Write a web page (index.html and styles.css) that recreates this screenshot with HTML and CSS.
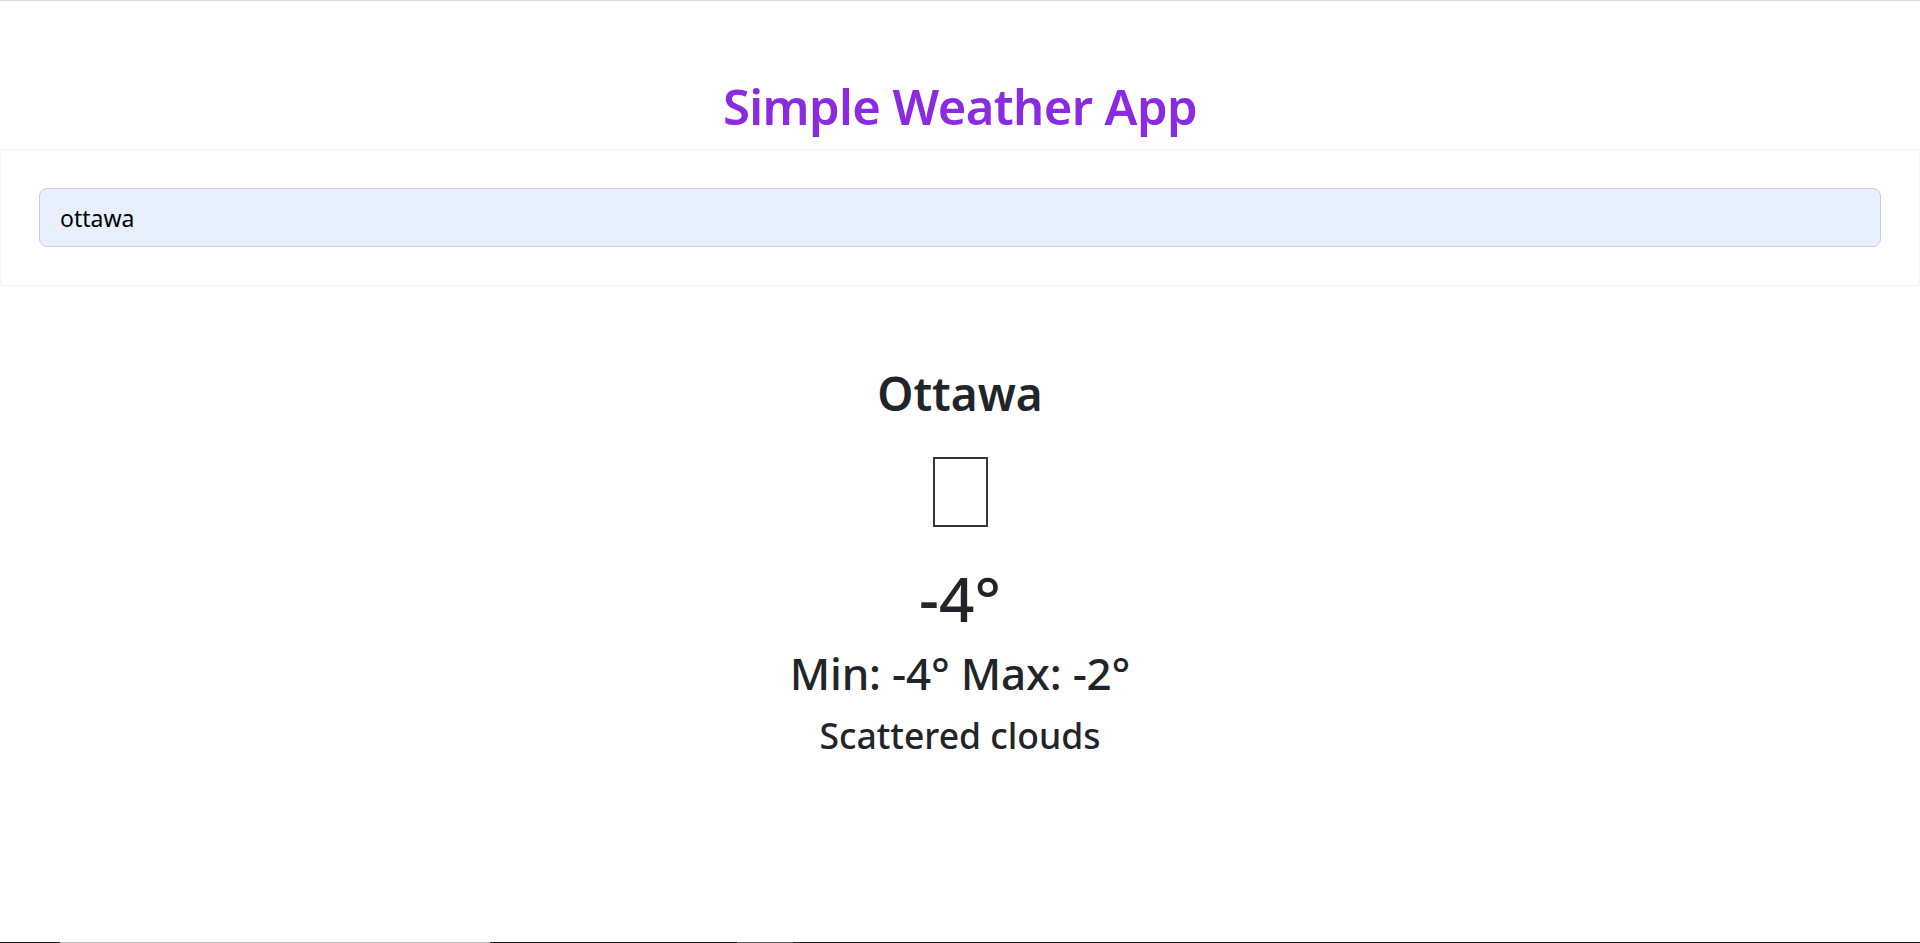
FILE: index.html
```html
<!DOCTYPE html>
<html lang="en">
<head>
<meta charset="utf-8">
<title>Simple Weather App</title>
<link rel="stylesheet" href="styles.css">
</head>
<body>
<div class="page">
  <main class="app">
    <h1 class="title">Simple Weather App</h1>
    <section class="search-card">
      <input class="search-input" type="text" value="ottawa" aria-label="City">
    </section>
    <section class="weather">
      <h2 class="city">Ottawa</h2>
      <div class="icon-row"><span class="icon-box"></span></div>
      <div class="temp">-4°</div>
      <div class="minmax">Min: -4° Max: -2°</div>
      <div class="desc">Scattered clouds</div>
    </section>
  </main>
  <div class="taskbar-edge">
    <span class="seg seg-dark seg-a"></span>
    <span class="seg seg-light seg-b"></span>
    <span class="seg seg-dark seg-c"></span>
    <span class="seg seg-mid seg-d"></span>
    <span class="seg seg-dark seg-e"></span>
  </div>
</div>
</body>
</html>
```

FILE: styles.css
```css
* { box-sizing: border-box; }

html, body {
  margin: 0;
  padding: 0;
  background: #ffffff;
}

body {
  font-family: "Noto Sans", "Open Sans", sans-serif;
  color: #212529;
}

.page {
  min-height: 943px;
  height: 943px;
  display: flex;
  flex-direction: column;
  border-top: 1px solid #dadada;
  overflow: hidden;
}

.app {
  flex: 1;
  display: flex;
  flex-direction: column;
}

.title {
  margin: 0;
  padding-top: 74px;
  margin-bottom: 11.6px;
  font-size: 49px;
  line-height: 62.4px;
  font-weight: 600;
  letter-spacing: -0.6px;
  color: #8a2be2;
  text-align: center;
}

.search-card {
  border: 1px solid #f4f4f4;
  padding: 38px;
  background: #ffffff;
}

.search-input {
  display: block;
  width: 100%;
  height: 59px;
  margin: 0;
  padding: 0 20px;
  border: 1px solid #c7d0dc;
  border-radius: 8px;
  background: #e8f0fe;
  font-family: "Noto Sans", "Open Sans", sans-serif;
  font-size: 23px;
  color: #000000;
  outline: none;
}

.weather {
  display: flex;
  flex-direction: column;
  align-items: center;
  text-align: center;
}

.city {
  margin: 76.6px 0 0 0;
  font-size: 46px;
  line-height: 60px;
  font-weight: 600;
}

.icon-row {
  margin-top: 34.4px;
  display: flex;
  justify-content: center;
}

.icon-box {
  display: block;
  width: 55px;
  height: 70px;
  border: 2px solid #363636;
}

.temp {
  margin-top: 34.75px;
  font-size: 62px;
  line-height: 73.2px;
  font-weight: 500;
}

.minmax {
  margin-top: 9.6px;
  font-size: 44px;
  line-height: 56.4px;
  font-weight: 500;
  letter-spacing: -0.2px;
}

.desc {
  margin-top: 12.5px;
  font-size: 35.5px;
  line-height: 44.9px;
  font-weight: 500;
}

.taskbar-edge {
  display: flex;
  height: 1px;
  flex: 0 0 1px;
}

.seg { display: block; height: 1px; }
.seg-dark { background: #202020; }
.seg-light { background: #bdbdbd; }
.seg-mid { background: #5c5c5c; }
.seg-a { width: 60px; }
.seg-b { width: 430px; }
.seg-c { width: 247px; }
.seg-d { width: 56px; }
.seg-e { flex: 1; }
```
